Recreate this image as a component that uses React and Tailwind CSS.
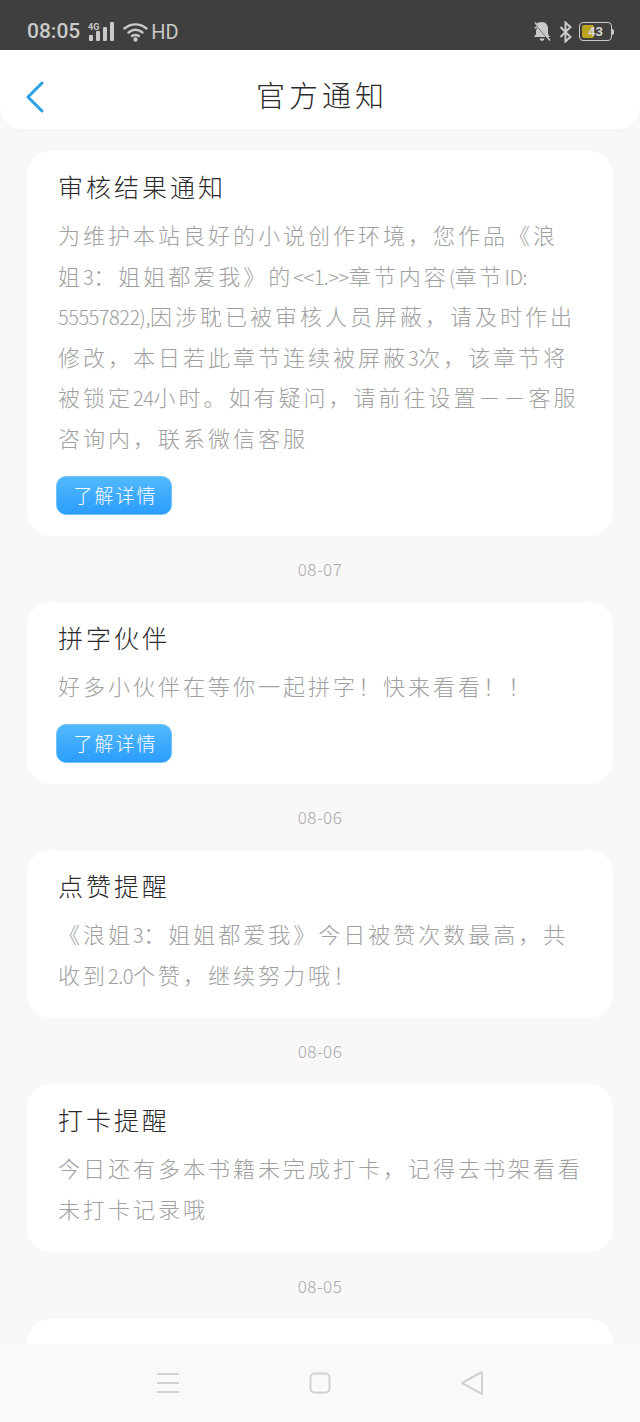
import React from 'react';

const notices = [
  {
    title: '审核结果通知',
    lines: [
      '为维护本站良好的小说创作环境，您作品《浪',
      '姐3：姐姐都爱我》的<<1.>>章节内容(章节ID:',
      '55557822),因涉耽已被审核人员屏蔽，请及时作出',
      '修改，本日若此章节连续被屏蔽3次，该章节将',
      '被锁定24小时。如有疑问，请前往设置－－客服',
      '咨询内，联系微信客服',
    ],
    button: true,
    date: '08-07',
  },
  {
    title: '拼字伙伴',
    lines: ['好多小伙伴在等你一起拼字！快来看看！！'],
    button: true,
    date: '08-06',
  },
  {
    title: '点赞提醒',
    lines: ['《浪姐3：姐姐都爱我》今日被赞次数最高，共', '收到2.0个赞，继续努力哦！'],
    date: '08-06',
  },
  {
    title: '打卡提醒',
    lines: ['今日还有多本书籍未完成打卡，记得去书架看看', '未打卡记录哦'],
    date: '08-05',
  },
];

// latin runs are much narrower than the cjk ones in the reference
const BodyLine = ({ text }) => (
  <div className="h-[40.600px]">
    {text.split(/([\x21-\x7e]+)/).map((part, i) =>
      i % 2 === 1 ? (
        <span key={i} className="text-[20px] leading-none tracking-[-0.500px]">{part}</span>
      ) : (
        part
      )
    )}
  </div>
);

const StatusBar = () => (
  <div className="h-[50px] shrink-0 bg-[#3f3f3f] flex items-center justify-between pl-[27px] pr-[26px] pt-[14px] pb-[1px] text-[#c9c9c9] font-['Roboto',sans-serif]">
    <div className="flex items-center">
      <span className="text-[21px] leading-none font-medium">08:05</span>
      <svg width="28" height="20" viewBox="0 0 28 20" className="ml-[8px]" fill="currentColor">
        <text x="0" y="8" fontSize="9" fontWeight="700" fontFamily="Roboto, sans-serif">4G</text>
        <rect x="1" y="13" width="4" height="6" rx="1" />
        <rect x="8" y="9" width="4" height="10" rx="1" />
        <rect x="15" y="5" width="4" height="14" rx="1" />
        <rect x="22" y="0" width="4" height="19" rx="1" />
      </svg>
      <svg width="26" height="20" viewBox="0 0 26 20" className="ml-[7px]" fill="none" stroke="currentColor" strokeWidth="2.4" strokeLinecap="round">
        <path d="M1.500 6.500C8 1 17 1 23.500 6.500" />
        <path d="M5.500 10.500C10 7 15 7 19.500 10.500" />
        <path d="M9 14C11.500 12.600 13.500 12.600 16 14" />
        <circle cx="12.500" cy="17.500" r="1" fill="currentColor" />
      </svg>
      <span className="ml-[2px] text-[20px] leading-none">HD</span>
    </div>
    <div className="flex items-center">
      <svg width="18" height="21" viewBox="0 0 18 21" fill="currentColor">
        <path d="M9 1c4 0 6 3 6 7v5l2 3H6L2.500 3.500C4 2 6 1 9 1zM1 6l9 10H1l2-3V8c0-1 0-1.500.2-2z" />
        <path d="M6.500 17.500h5a2.500 2.500 0 0 1-5 0z" />
        <path d="M1 1l16 19" stroke="#3f3f3f" strokeWidth="1.500" />
        <path d="M2 1.500l15 18" stroke="currentColor" strokeWidth="1.500" />
      </svg>
      <svg width="14" height="22" viewBox="0 0 14 22" className="ml-[8px]" fill="none" stroke="currentColor" strokeWidth="2">
        <path d="M1.500 6l10 10-5 4.500V1.500l5 4.500-10 10" />
      </svg>
      <div className="ml-[6px] flex items-center">
        <div className="w-[33px] h-[19px] rounded-[4px] border-[1.500px] border-[#c9c9c9] p-[2px] relative">
          <div className="w-[12px] h-full rounded-[2px] bg-[#b9a51f]" />
          <span className="absolute inset-0 flex items-center justify-center text-[13px] font-bold leading-none text-[#d6d6d6]">43</span>
        </div>
        <div className="w-[2px] h-[6px] bg-[#c9c9c9] rounded-r-sm" />
      </div>
    </div>
  </div>
);

const NoticeCard = ({ notice }) => (
  <>
    <div className={`bg-white rounded-[24px] pl-[31px] pr-[10px] pt-[17px] ${notice.button ? 'pb-[21px]' : 'pb-[23.500px]'}`}>
      <h2 className="text-[25px] leading-[36px] font-light tracking-[3px] text-[#2a2a2a]">{notice.title}</h2>
      <div className="mt-[10px] text-[22px] leading-[40.600px] font-light tracking-[3px] text-[#a0a0a0] whitespace-nowrap">
        {notice.lines.map((line) => (
          <BodyLine key={line} text={line} />
        ))}
      </div>
      {notice.button && (
        <button className="mt-[18px] -ml-[2px] w-[116px] h-[39px] rounded-[10px] border border-[#6cc4fd] bg-gradient-to-b from-[#52b8fb] to-[#2a9dfd] text-white text-[19px] font-light tracking-[2px] pl-[3px] flex items-center justify-center">
          了解详情
        </button>
      )}
    </div>
    <div className="h-[66.500px] flex items-center justify-center text-[17px] tracking-[0.500px] text-[#a9a9a9] font-light">{notice.date}</div>
  </>
);

export default function App() {
  return (
    <div className="h-[1422px] overflow-hidden flex flex-col bg-[#f9f7f8] font-['Noto_Sans_CJK_SC','Noto_Sans',sans-serif]">
      <StatusBar />
      <div className="h-[81px] shrink-0 bg-white rounded-b-[24px] border-b border-[#f1eff0] flex items-center justify-center relative">
        <svg width="20" height="32" viewBox="0 0 20 32" className="absolute left-[25px] top-[31px]" fill="none" stroke="#2d9fe6" strokeWidth="3" strokeLinecap="round" strokeLinejoin="round">
          <path d="M17 2L3 16l14 14" />
        </svg>
        <h1 className="text-[29px] font-light tracking-[4px] text-[#2b2b2b] leading-none mt-[8px] ml-[4px]">官方通知</h1>
      </div>
      <div className="flex-1 min-h-0 overflow-hidden px-[27px] pt-[20px]">
        {notices.map((notice) => (
          <NoticeCard key={notice.title} notice={notice} />
        ))}
        <div className="h-[60px] bg-white rounded-t-[24px]" />
      </div>
      <div className="h-[78px] shrink-0 bg-[#f9f9f9] flex items-center justify-center gap-[129px] text-[#d2d2d2]">
        <svg width="24" height="22" viewBox="0 0 24 22" stroke="currentColor" strokeWidth="2">
          <path d="M1 2h22M1 11h22M1 20h22" />
        </svg>
        <svg width="22" height="22" viewBox="0 0 22 22" fill="none" stroke="currentColor" strokeWidth="2">
          <rect x="1.500" y="1.500" width="19" height="19" rx="4" />
        </svg>
        <svg width="24" height="26" viewBox="0 0 24 26" fill="none" stroke="currentColor" strokeWidth="2" strokeLinejoin="round">
          <path d="M22 2v22L2 13z" />
        </svg>
      </div>
    </div>
  );
}
